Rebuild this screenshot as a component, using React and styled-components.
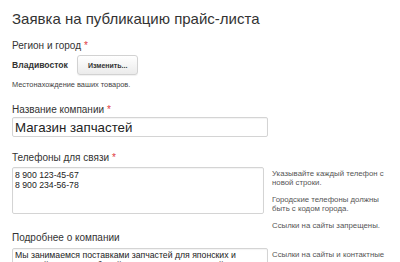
import React, { useState } from 'react';
import styled, { createGlobalStyle } from 'styled-components';

const GlobalStyle = createGlobalStyle`
  body {
    margin: 0;
    background: #fff;
    font-family: "Liberation Sans", Arial, sans-serif;
    color: #333;
  }
`;

const Page = styled.div`
  padding: 10px 12px 0;
  width: 400px;
  height: 262px;
  box-sizing: border-box;
  overflow: hidden;
`;

const Title = styled.h1`
  margin: 0 0 12px;
  font-size: 15px;
  font-weight: normal;
  color: #333;
  line-height: 18px;
`;

const Field = styled.div`
  margin-bottom: ${(p) => p.$gap ?? 15}px;
`;

const Label = styled.div`
  font-size: 10px;
  line-height: 12px;
  color: #333;
  margin-bottom: ${(p) => p.$mb ?? 3}px;
`;

const Required = styled.span`
  color: #e0393e;
  margin-left: 3px;
`;

const Row = styled.div`
  display: flex;
  align-items: flex-start;
`;

const Main = styled.div`
  width: 260px;
  flex: none;
`;

const CityRow = styled.div`
  display: flex;
  align-items: center;
  gap: 9px;
`;

const City = styled.span`
  font-size: 8.6px;
  font-weight: bold;
  color: #333;
`;

const Button = styled.button`
  font-family: inherit;
  font-size: 7px;
  font-weight: bold;
  color: #333;
  height: 20px;
  padding: 0 10px;
  border: 1px solid #d2d2d2;
  border-radius: 3px;
  background: linear-gradient(#fff, #ebebeb);
  box-shadow: 0 1px 1px rgba(0, 0, 0, 0.06);
`;

const Hint = styled.div`
  font-size: 7.4px;
  line-height: 9px;
  color: #444;
  margin-top: 5px;
`;

const TextInput = styled.input`
  display: block;
  width: 256px;
  height: 20px;
  box-sizing: border-box;
  border: 1px solid #d4d4d4;
  border-radius: 2px;
  box-shadow: inset 0 1px 1px rgba(0, 0, 0, 0.05);
  padding: 0 2px;
  font-family: inherit;
  font-size: 13.3px;
  color: #222;
  outline: none;
`;

const TextArea = styled.textarea`
  display: block;
  width: ${(p) => p.$w}px;
  height: ${(p) => p.$h}px;
  box-sizing: border-box;
  border: 1px solid #d4d4d4;
  border-radius: 2px;
  box-shadow: inset 0 1px 1px rgba(0, 0, 0, 0.05);
  padding: ${(p) => p.$pt}px 2px 0;
  font-family: inherit;
  font-size: 8.7px;
  line-height: 10px;
  color: #222;
  resize: none;
  overflow: hidden;
  outline: none;
`;

const Help = styled.div`
  font-size: 7.8px;
  line-height: 9px;
  color: #555;
  width: 124px;
  padding-top: ${(p) => p.$pt}px;
`;

const HelpPara = styled.p`
  margin: 0 0 8px;

  &:last-child {
    margin-bottom: 0;
  }
`;

export default function App() {
  const [company, setCompany] = useState('Магазин запчастей');
  const [phones, setPhones] = useState('8 900 123-45-67\n8 900 234-56-78');
  const [about, setAbout] = useState(
    'Мы занимаемся поставками запчастей для японских и европейских автомобилей с 2002 года. Имеем свой склад и'
  );

  return (
    <Page>
      <GlobalStyle />
      <Title>Заявка на публикацию прайс-листа</Title>

      <Field $gap={15}>
        <Label>
          Регион и город<Required>*</Required>
        </Label>
        <CityRow>
          <City>Владивосток</City>
          <Button type="button">Изменить...</Button>
        </CityRow>
        <Hint>Местонахождение ваших товаров.</Hint>
      </Field>

      <Field $gap={15}>
        <Label $mb={1}>
          Название компании<Required>*</Required>
        </Label>
        <TextInput value={company} onChange={(e) => setCompany(e.target.value)} />
      </Field>

      <Field $gap={2}>
        <Label>
          Телефоны для связи<Required>*</Required>
        </Label>
        <Row>
          <Main>
            <TextArea $w={252} $h={47} $pt={1.5} value={phones} onChange={(e) => setPhones(e.target.value)} />
          </Main>
          <Help $pt={1.5}>
            <HelpPara>Указывайте каждый телефон с новой строки.</HelpPara>
            <HelpPara>Городские телефоны должны быть с кодом города.</HelpPara>
            <HelpPara>Ссылки на сайты запрещены.</HelpPara>
          </Help>
        </Row>
      </Field>

      <Field>
        <Label $mb={4}>Подробнее о компании</Label>
        <Row>
          <Main>
            <TextArea $w={256} $h={40} $pt={1} value={about} onChange={(e) => setAbout(e.target.value)} />
          </Main>
          <Help $pt={2}>
            <HelpPara>Ссылки на сайты и контактные данные запрещены.</HelpPara>
          </Help>
        </Row>
      </Field>
    </Page>
  );
}
